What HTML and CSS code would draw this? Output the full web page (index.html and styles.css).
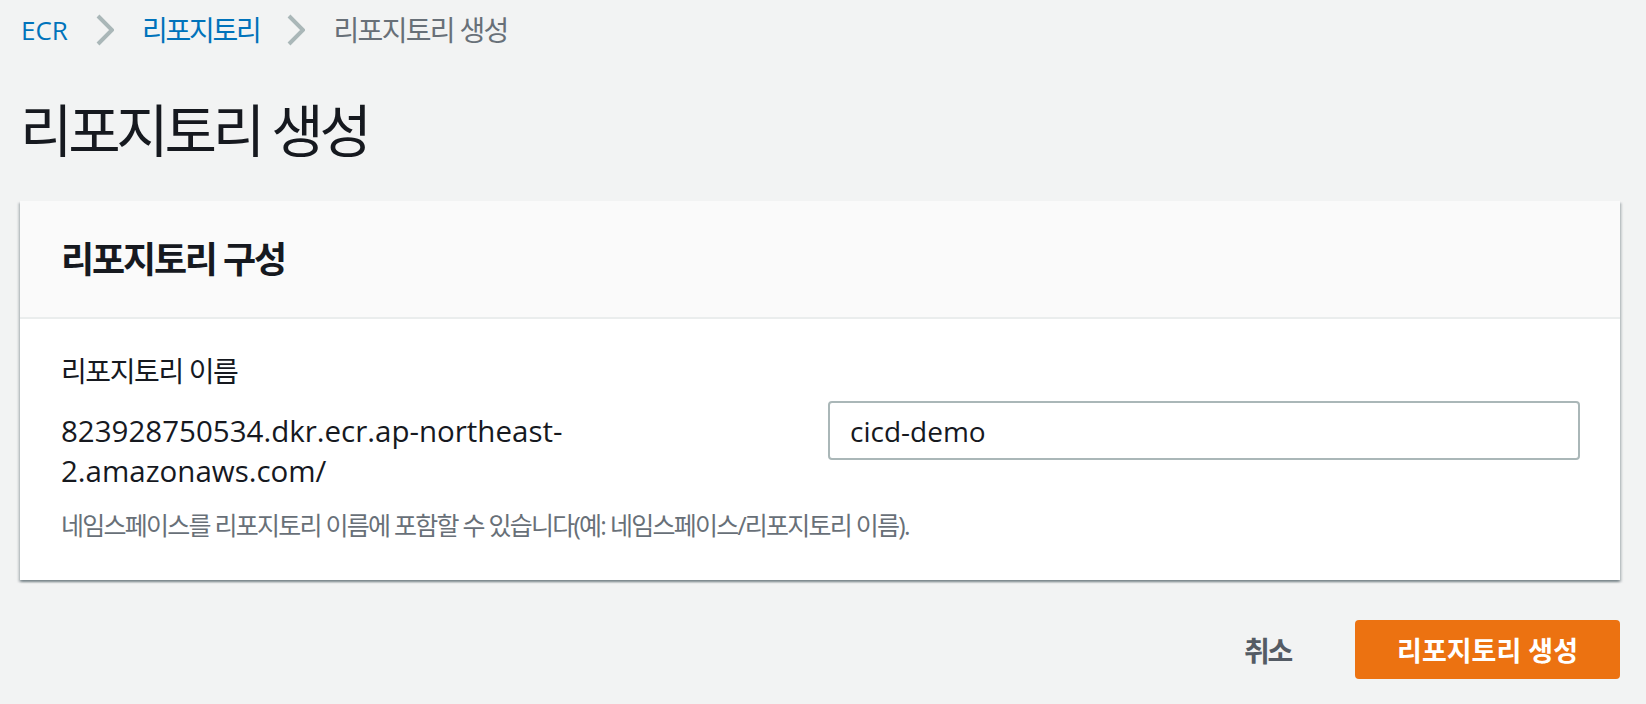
FILE: index.html
```html
<!DOCTYPE html>
<html lang="ko">
<head>
<meta charset="utf-8">
<title>리포지토리 생성</title>
<link rel="stylesheet" href="styles.css">
</head>
<body>
<div class="page">
  <nav class="breadcrumbs">
    <a class="crumb-link crumb-latin" href="#">ECR</a>
    <svg class="chevron" width="18" height="32" viewBox="0 0 18 32"><polyline points="2,2 16,16 2,30" fill="none" stroke="#aab7b8" stroke-width="4"/></svg>
    <a class="crumb-link crumb-ko" href="#">리포지토리</a>
    <svg class="chevron" width="18" height="32" viewBox="0 0 18 32"><polyline points="2,2 16,16 2,30" fill="none" stroke="#aab7b8" stroke-width="4"/></svg>
    <span class="crumb-current">리포지토리 생성</span>
  </nav>

  <h1 class="title">리포지토리 생성</h1>

  <section class="panel">
    <div class="panel-header">
      <h2 class="panel-title">리포지토리 구성</h2>
    </div>
    <div class="panel-body">
      <div class="field-label">리포지토리 이름</div>
      <div class="field-row">
        <div class="url">823928750534.dkr.ecr.ap-northeast-2.amazonaws.com/</div>
        <div class="input-wrap">
          <input class="text-input" type="text" value="cicd-demo">
        </div>
      </div>
      <div class="hint">네임스페이스를 리포지토리 이름에 포함할 수 있습니다(예: 네임스페이스/리포지토리 이름).</div>
    </div>
  </section>

  <div class="actions">
    <button class="btn-cancel" type="button">취소</button>
    <button class="btn-primary" type="button">리포지토리 생성</button>
  </div>
</div>
</body>
</html>
```

FILE: styles.css
```css
html, body {
  margin: 0;
  padding: 0;
}

body {
  background: #f2f3f3;
  font-family: "Open Sans", "Noto Sans CJK KR", sans-serif;
  color: #16191f;
}

.page {
  padding: 0 26px 0 20px;
}

.breadcrumbs {
  display: flex;
  align-items: center;
  height: 60px;
  gap: 28px;
  padding-left: 1px;
}

.crumb-link {
  color: #0073bb;
  text-decoration: none;
  line-height: 36px;
}

.crumb-latin {
  font-size: 26px;
  letter-spacing: 0;
}

.crumb-ko {
  font-size: 28px;
  letter-spacing: -0.08em;
}

.crumb-current {
  color: #687078;
  font-size: 28px;
  line-height: 36px;
  letter-spacing: -0.06em;
}

.chevron {
  display: block;
  flex: none;
}

.title {
  margin: 38px 0 39px;
  font-size: 57px;
  line-height: 64px;
  font-weight: 400;
  letter-spacing: -0.075em;
  color: #16191f;
}

.panel {
  background: #ffffff;
  box-shadow: 0 2px 2px 0 rgba(0, 28, 36, 0.3),
              2px 2px 2px 0 rgba(0, 28, 36, 0.15),
              -2px 2px 2px 0 rgba(0, 28, 36, 0.15);
}

.panel-header {
  background: #fafafa;
  border-bottom: 2px solid #eaeded;
  padding: 37px 40px 35px 41px;
}

.panel-title {
  margin: 0;
  font-size: 36px;
  line-height: 44px;
  font-weight: 700;
  letter-spacing: -0.06em;
  color: #16191f;
}

.panel-body {
  padding: 34px 40px 39px 41px;
}

.field-label {
  font-size: 28px;
  line-height: 36px;
  letter-spacing: -0.05em;
  color: #16191f;
}

.field-row {
  display: grid;
  grid-template-columns: 1fr 1fr;
  column-gap: 15px;
  margin-top: 12px;
}

.url {
  font-size: 29.5px;
  line-height: 40px;
  padding-top: 10px;
  color: #16191f;
}

.text-input {
  display: block;
  width: 100%;
  height: 59px;
  box-sizing: border-box;
  border: 2px solid #aab7b8;
  border-radius: 4px;
  padding: 0 20px;
  font-family: "Open Sans", "Noto Sans CJK KR", sans-serif;
  font-size: 28px;
  color: #16191f;
  background: #ffffff;
  outline: none;
}

.hint {
  margin-top: 18px;
  font-size: 25px;
  line-height: 32px;
  letter-spacing: -0.07em;
  color: #687078;
}

.actions {
  display: flex;
  justify-content: flex-end;
  align-items: center;
  gap: 64px;
  margin-top: 40px;
}

.btn-cancel {
  background: none;
  border: none;
  padding: 0;
  font-family: "Open Sans", "Noto Sans CJK KR", sans-serif;
  font-size: 28px;
  font-weight: 700;
  letter-spacing: -0.08em;
  color: #545b64;
  cursor: pointer;
}

.btn-primary {
  height: 59px;
  padding: 0 42px;
  background: #ec7211;
  border: none;
  border-radius: 4px;
  font-family: "Open Sans", "Noto Sans CJK KR", sans-serif;
  font-size: 27px;
  font-weight: 700;
  letter-spacing: 0;
  color: #ffffff;
  cursor: pointer;
}
```
